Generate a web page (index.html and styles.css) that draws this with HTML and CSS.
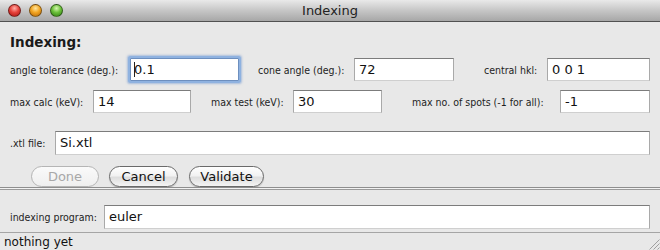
FILE: index.html
```html
<!DOCTYPE html>
<html>
<head>
<meta charset="utf-8">
<link rel="stylesheet" href="styles.css">
</head>
<body>
<div class="window">
  <div class="titlebar">
    <div class="lights">
      <span class="light red"></span>
      <span class="light yellow"></span>
      <span class="light green"></span>
    </div>
    <div class="title">Indexing</div>
  </div>
  <div class="content">
    <div class="heading">Indexing:</div>
    <div class="row r1">
      <label class="lbl l-tol">angle tolerance (deg.):</label>
      <div class="field focus f-tol"><span class="caret"></span>0.1</div>
      <label class="lbl l-cone">cone angle (deg.):</label>
      <div class="field f-cone">72</div>
      <label class="lbl l-hkl">central hkl:</label>
      <div class="field f-hkl">0 0 1</div>
    </div>
    <div class="row r2">
      <label class="lbl l-calc">max calc (keV):</label>
      <div class="field f-calc">14</div>
      <label class="lbl l-test">max test (keV):</label>
      <div class="field f-test">30</div>
      <label class="lbl l-spots">max no. of spots (-1 for all):</label>
      <div class="field f-spots">-1</div>
    </div>
    <div class="row r3">
      <label class="lbl l-xtl">.xtl file:</label>
      <div class="field grow">Si.xtl</div>
    </div>
    <div class="buttons">
      <button class="btn disabled b-done">Done</button>
      <button class="btn b-cancel">Cancel</button>
      <button class="btn b-validate">Validate</button>
    </div>
  </div>
  <div class="separator"></div>
  <div class="lower">
    <div class="row r4">
      <label class="lbl l-prog">indexing program:</label>
      <div class="field grow">euler</div>
    </div>
  </div>
  <div class="status">
    <span class="status-text">nothing yet</span>
    <svg class="grip" width="12" height="12" viewBox="0 0 12 12">
      <line x1="11.5" y1="1.5" x2="1.5" y2="11.5" stroke="#a0a0a0" stroke-width="1"/>
      <line x1="11.5" y1="5.5" x2="5.5" y2="11.5" stroke="#a0a0a0" stroke-width="1"/>
      <line x1="11.5" y1="9.5" x2="9.5" y2="11.5" stroke="#a0a0a0" stroke-width="1"/>
    </svg>
  </div>
</div>
</body>
</html>
```

FILE: styles.css
```css
html, body {
  margin: 0;
  padding: 0;
}
body {
  width: 660px;
  height: 250px;
  overflow: hidden;
  background: #e8e8e8;
  font-family: "DejaVu Sans", "Liberation Sans", sans-serif;
  color: #1a1a1a;
}
.window {
  width: 660px;
  height: 250px;
  display: flex;
  flex-direction: column;
  background: #e8e8e8;
}
.titlebar {
  height: 21px;
  flex: none;
  border-bottom: 1px solid #515151;
  background: linear-gradient(#e9e9e9, #c6c6c6 50%, #a7a7a7);
  position: relative;
  display: flex;
  align-items: center;
  justify-content: center;
}
.lights {
  position: absolute;
  left: 8px;
  top: 4px;
  display: flex;
  gap: 8px;
}
.light {
  width: 13px;
  height: 13px;
  border-radius: 50%;
  box-sizing: border-box;
  border: 1px solid rgba(0,0,0,0.45);
}
.red { background: radial-gradient(circle at 50% 30%, #ffb0a8 0, #e8433c 45%, #a5120f 100%); }
.yellow { background: radial-gradient(circle at 50% 30%, #ffe6a0 0, #f3a623 45%, #b4650a 100%); }
.green { background: radial-gradient(circle at 50% 30%, #d6f7b0 0, #6cc13b 45%, #2e7a12 100%); }
.title {
  font-size: 13px;
  color: #222;
}
.content {
  padding: 12px 10px 0 10px;
  flex: none;
}
.heading {
  font-weight: bold;
  font-size: 13.5px;
  height: 17px;
  line-height: 17px;
}
.row {
  display: flex;
  align-items: center;
}
.r1 { margin-top: 7px; }
.r2 { margin-top: 9px; }
.r3 { margin-top: 18px; }
.lbl {
  font-family: "DejaVu Sans Condensed", "Liberation Sans", sans-serif;
  font-size: 10.5px;
  white-space: nowrap;
  flex: none;
  color: #1e1e1e;
}
.field {
  box-sizing: border-box;
  height: 23px;
  background: #fff;
  border: 1px solid #a9a9a9;
  border-top-color: #7c7c7c;
  border-bottom-color: #cfcfcf;
  font-size: 13px;
  line-height: 21px;
  padding-left: 4px;
  flex: none;
  position: relative;
  color: #111;
}
.grow { flex: 1; height: 24px; line-height: 22px; }
.focus {
  border: 1px solid #6d8fbf;
  box-shadow: 0 0 0 2px #8fb2e0, 0 0 2px 3px rgba(110,150,210,0.5);
  border-radius: 1px;
  padding-left: 3px;
}
.caret {
  display: inline-block;
  width: 1px;
  height: 15px;
  background: #222;
  vertical-align: -3px;
  margin-right: -1px;
}
.l-tol { width: 120px; }
.f-tol { width: 109px; }
.l-cone { width: 96px; margin-left: 19px; }
.f-cone { width: 100px; }
.l-hkl { width: 63px; margin-left: 30px; }
.f-hkl { width: 103px; }
.l-calc { width: 83px; }
.f-calc { width: 98px; }
.l-test { width: 82px; margin-left: 20px; }
.f-test { width: 89px; }
.l-spots { width: 148px; margin-left: 30px; }
.f-spots { width: 90px; }
.l-xtl { width: 45px; }
.l-prog { width: 94px; }
.buttons {
  display: flex;
  margin-top: 10px;
  padding-left: 21px;
  gap: 12px;
  height: 22px;
}
.btn {
  box-sizing: border-box;
  height: 21px;
  margin-top: 1px;
  border-radius: 11px;
  border: 1px solid #6a6a6a;
  background: linear-gradient(#ffffff, #f2f2f2 45%, #dedede 55%, #f4f4f4);
  font-family: "DejaVu Sans", "Liberation Sans", sans-serif;
  font-size: 13px;
  color: #111;
  padding: 0;
  box-shadow: 0 1px 1px rgba(0,0,0,0.2);
}
.b-done { width: 68px; }
.b-cancel { width: 69px; margin-left: -2px; }
.b-validate { width: 75px; margin-left: -1px; }
.disabled {
  border-color: #b5b5b5;
  color: #a8a8a8;
  background: linear-gradient(#fafafa, #efefef);
  box-shadow: none;
}
.separator {
  flex: none;
  height: 1px;
  border-top: 1px solid #8e8e8e;
  border-bottom: 1px solid #9a9a9a;
  background: #f2f2f2;
}
.lower {
  flex: none;
  padding: 15px 10px 0 10px;
  height: 27px;
}
.status {
  flex: 1;
  border-top: 1px solid #a5a5a5;
  display: flex;
  align-items: center;
  padding-left: 4px;
  position: relative;
}
.status-text {
  font-size: 12px;
  color: #111;
}
.grip {
  position: absolute;
  right: 0;
  bottom: 0;
}
```
